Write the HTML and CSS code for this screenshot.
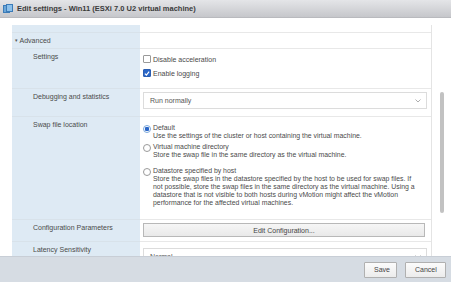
FILE: index.html
```html
<!DOCTYPE html>
<html lang="en">
<head>
    <meta charset="UTF-8">
    <title>Edit settings - Win11</title>
    <link rel="stylesheet" href="styles.css">
</head>
<body>
    <div class="dialog">
        <header class="titlebar">
            <svg class="title-icon" width="10" height="10" viewBox="0 0 10 10">
                <rect x="0.5" y="1.5" width="6" height="7" fill="#6aa6d8" stroke="#3b7bb8"/>
                <rect x="3.5" y="0.5" width="6" height="7" fill="#8cc0ea" stroke="#3b7bb8"/>
            </svg>
            <span class="title-text">Edit settings - Win11 (ESXi 7.0 U2 virtual machine)</span>
        </header>

        <main class="content">
            <div class="settings-table">
                <div class="row row-cut">
                    <div class="label"></div>
                    <div class="value"></div>
                </div>
                <div class="row row-section">
                    <div class="label section-label"><span class="caret">&#9662;</span> Advanced</div>
                    <div class="value"></div>
                </div>
                <div class="row row-settings">
                    <div class="label indent">Settings</div>
                    <div class="value">
                        <label class="check"><span class="box"></span>Disable acceleration</label>
                        <label class="check"><span class="box checked"><svg width="7" height="7" viewBox="0 0 7 7"><path d="M1 3.6 L2.8 5.4 L6 1.4" fill="none" stroke="#fff" stroke-width="1.4"/></svg></span>Enable logging</label>
                    </div>
                </div>
                <div class="row row-debug">
                    <div class="label indent">Debugging and statistics</div>
                    <div class="value">
                        <div class="select">Run normally <span class="chev"><svg width="6" height="4" viewBox="0 0 6 4"><path d="M0.5 0.5 L3 3 L5.5 0.5" fill="none" stroke="#999" stroke-width="0.8"/></svg></span></div>
                    </div>
                </div>
                <div class="row row-swap">
                    <div class="label indent">Swap file location</div>
                    <div class="value">
                        <div class="radio-item">
                            <span class="radio selected"></span>
                            <div class="radio-text">
                                <div>Default</div>
                                <div>Use the settings of the cluster or host containing the virtual machine.</div>
                            </div>
                        </div>
                        <div class="radio-item">
                            <span class="radio"></span>
                            <div class="radio-text">
                                <div>Virtual machine directory</div>
                                <div>Store the swap file in the same directory as the virtual machine.</div>
                            </div>
                        </div>
                        <div class="radio-item">
                            <span class="radio"></span>
                            <div class="radio-text">
                                <div>Datastore specified by host</div>
                                <div>Store the swap files in the datastore specified by the host to be used for swap files. If not possible, store the swap files in the same directory as the virtual machine. Using a datastore that is not visible to both hosts during vMotion might affect the vMotion performance for the affected virtual machines.</div>
                            </div>
                        </div>
                    </div>
                </div>
                <div class="row row-config">
                    <div class="label indent">Configuration Parameters</div>
                    <div class="value">
                        <button class="wide-btn">Edit Configuration...</button>
                    </div>
                </div>
                <div class="row row-latency">
                    <div class="label indent">Latency Sensitivity</div>
                    <div class="value">
                        <div class="select">Normal <span class="chev"><svg width="6" height="4" viewBox="0 0 6 4"><path d="M0.5 0.5 L3 3 L5.5 0.5" fill="none" stroke="#999" stroke-width="0.8"/></svg></span></div>
                    </div>
                </div>
            </div>
            <div class="scroll-track">
                <div class="scroll-thumb"></div>
            </div>
        </main>

        <footer class="footer">
            <button class="footer-btn">Save</button>
            <button class="footer-btn">Cancel</button>
        </footer>
    </div>
</body>
</html>
```

FILE: styles.css
```css
* {
    margin: 0;
    padding: 0;
    box-sizing: border-box;
    font-family: "Liberation Sans", Arial, sans-serif;
}

body {
    background-color: #fff;
    width: 451px;
    height: 282px;
    overflow: hidden;
}

.dialog {
    display: flex;
    flex-direction: column;
    height: 282px;
}

.titlebar {
    height: 18px;
    display: flex;
    align-items: center;
    gap: 4px;
    padding-left: 3px;
    background: linear-gradient(#e4e5e8, #c6c7cb);
    border-bottom: 1px solid #b9babe;
}

.title-text {
    font-size: 7.5px;
    font-weight: bold;
    color: #3a3a3a;
}

.content {
    flex: 1;
    display: flex;
    overflow: hidden;
    padding: 7px 0 0 12px;
}

.settings-table {
    width: 420px;
    border-right: 1px solid #e4e4e4;
    font-size: 7px;
    color: #4a4a4a;
}

.row {
    display: flex;
    border-bottom: 1px solid #e8e8e8;
}

.label {
    width: 128px;
    flex-shrink: 0;
    background-color: #deeaf4;
    padding-top: 4px;
    border-bottom: 1px solid #d8e2ea;
    margin-bottom: -1px;
}

.indent {
    padding-left: 21px;
}

.value {
    flex: 1;
    padding: 3px 4px 0 3px;
}

.row-cut {
    height: 8px;
}

.row-section {
    height: 16px;
}

.section-label {
    padding-left: 3px;
}

.caret {
    font-size: 5px;
    color: #555;
    vertical-align: 1px;
}

.row-settings {
    height: 40px;
}

.row-settings .value {
    display: flex;
    flex-direction: column;
    gap: 6px;
    padding-top: 6px;
}

.check {
    display: flex;
    align-items: center;
    gap: 2px;
}

.box {
    width: 8px;
    height: 8px;
    border: 1px solid #999;
    border-radius: 1px;
    background-color: #fff;
    display: flex;
    align-items: center;
    justify-content: center;
}

.box.checked {
    background-color: #2a66c8;
    border-color: #2a5db0;
}

.row-debug {
    height: 28px;
}

.row-debug .value {
    padding-top: 3px;
}

.select {
    height: 17px;
    border: 1px solid #dcdcdc;
    display: flex;
    align-items: center;
    justify-content: space-between;
    padding: 0 5px 0 6px;
    color: #555;
}

.row-swap {
    height: 103px;
}

.row-swap .value {
    padding-top: 7px;
    display: flex;
    flex-direction: column;
    gap: 3px;
}

.radio-item {
    display: flex;
    gap: 2px;
    line-height: 8px;
}

.radio-item:last-child {
    margin-top: 5px;
}

.radio {
    width: 8px;
    height: 8px;
    border-radius: 50%;
    border: 1px solid #9a9a9a;
    flex-shrink: 0;
    margin-top: 1px;
    background-color: #fff;
}

.radio.selected {
    border-color: #7ba8dc;
    background: radial-gradient(circle, #2a66c8 0 2px, #fff 2.5px);
}

.radio-text {
    width: 268px;
    font-size: 6.9px;
    color: #4a4a4a;
}

.row-config {
    height: 22px;
}

.wide-btn {
    width: 282px;
    height: 14px;
    font-size: 7px;
    color: #444;
    background: linear-gradient(#f6f6f6, #e9e9e9);
    border: 1px solid #b8b8b8;
}

.row-latency {
    height: 20px;
}

.row-latency .value {
    padding-top: 6px;
}

.scroll-track {
    width: 19px;
    padding: 67px 0 0 8px;
}

.scroll-thumb {
    width: 4px;
    height: 121px;
    background-color: #c2c2c2;
    border-radius: 2px;
}

.footer {
    height: 26px;
    background-color: #d6dce3;
    border-top: 1px solid #c8ced6;
    display: flex;
    justify-content: flex-end;
    align-items: center;
    gap: 8px;
    padding-right: 5px;
}

.footer-btn {
    height: 16px;
    font-size: 7px;
    color: #444;
    background: linear-gradient(#fbfbfb, #ececec);
    border: 1px solid #b0b0b0;
    border-radius: 1px;
    padding: 0 9px;
}

.footer-btn:first-child {
    width: 33px;
}

.footer-btn:last-child {
    width: 41px;
}
```
